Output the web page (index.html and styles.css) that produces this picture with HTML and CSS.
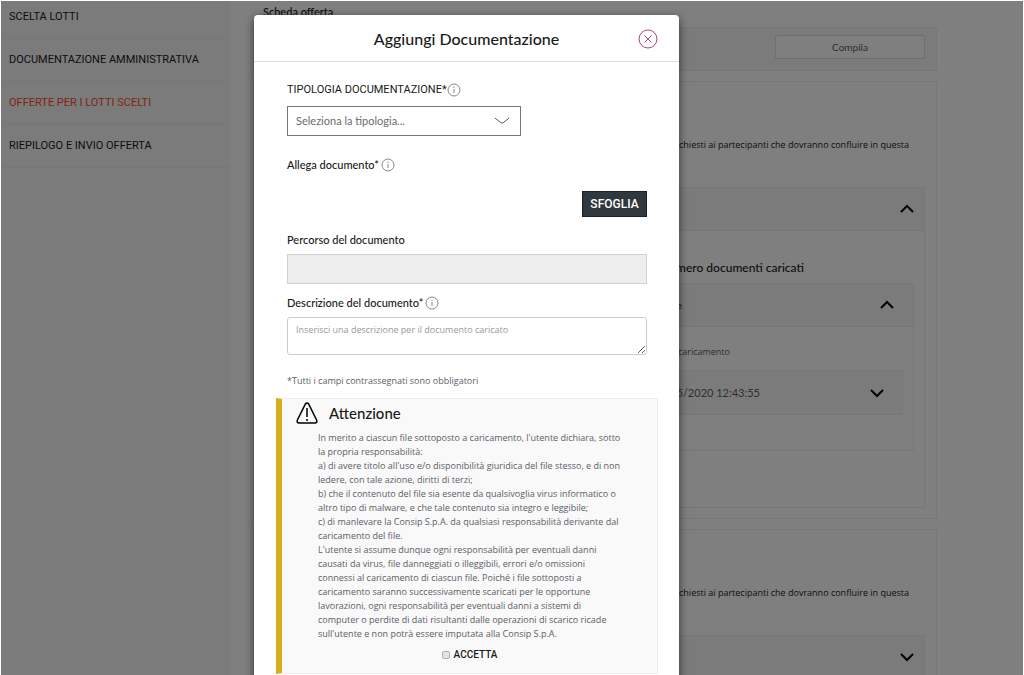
FILE: index.html
```html
<!DOCTYPE html>
<html lang="it">
<head>
    <meta charset="UTF-8">
    <meta name="viewport" content="width=device-width, initial-scale=1.0">
    <title>Aggiungi Documentazione</title>
    <link rel="stylesheet" href="styles.css">
</head>
<body>
    <div class="app">
        <nav class="sidebar">
            <a href="#">SCELTA LOTTI</a>
            <a href="#">DOCUMENTAZIONE AMMINISTRATIVA</a>
            <a href="#" class="active">OFFERTE PER I LOTTI SCELTI</a>
            <a href="#">RIEPILOGO E INVIO OFFERTA</a>
        </nav>

        <main class="content">
            <h2 class="content-title">Scheda offerta</h2>
            <div class="toolbar">
                <button type="button" class="compile-button">Compila</button>
            </div>

            <section class="card">
                <p class="card-text">richiesti ai partecipanti che dovranno confluire in questa</p>
                <div class="panel">
                    <div class="panel-header">
                        <svg class="arrow" viewBox="0 0 14 10"><path d="M1 8 L7 2 L13 8"/></svg>
                    </div>
                    <div class="panel-body">
                        <h3 class="panel-title">Numero documenti caricati</h3>
                        <div class="panel">
                            <div class="panel-header">
                                <span class="panel-name">Nome</span>
                                <svg class="arrow" viewBox="0 0 14 10"><path d="M1 8 L7 2 L13 8"/></svg>
                            </div>
                            <div class="file-list">
                                <p class="file-label">Data caricamento</p>
                                <div class="file-row">
                                    <span>05/2020 12:43:55</span>
                                    <svg class="arrow" viewBox="0 0 14 10"><path d="M1 2 L7 8 L13 2"/></svg>
                                </div>
                            </div>
                        </div>
                    </div>
                </div>
            </section>

            <section class="card">
                <p class="card-text">richiesti ai partecipanti che dovranno confluire in questa</p>
                <div class="panel">
                    <div class="panel-header">
                        <svg class="arrow" viewBox="0 0 14 10"><path d="M1 2 L7 8 L13 2"/></svg>
                    </div>
                </div>
            </section>
        </main>

        <div class="overlay">
            <div class="modal" role="dialog" aria-labelledby="modal-title">
                <header class="modal-header">
                    <h1 id="modal-title">Aggiungi Documentazione</h1>
                    <button type="button" class="close-button" aria-label="Chiudi">
                        <svg viewBox="0 0 20 20"><circle cx="10" cy="10" r="9"/><path d="M6.5 6.5 L13.5 13.5 M13.5 6.5 L6.5 13.5"/></svg>
                    </button>
                </header>

                <form class="modal-body">
                    <div class="field">
                        <div class="label-row label-caps">
                            <label for="tipologia">TIPOLOGIA DOCUMENTAZIONE*</label>
                            <svg class="info" viewBox="0 0 14 14"><circle cx="7" cy="7" r="6"/><path d="M7 6 V10 M7 3.6 V5"/></svg>
                        </div>
                        <div class="select-box">
                            <select id="tipologia">
                                <option>Seleziona la tipologia...</option>
                            </select>
                            <svg class="select-arrow" viewBox="0 0 16 8"><path d="M1 1 L6.5 5.5 Q8 6.8 9.5 5.5 L15 1"/></svg>
                        </div>
                    </div>

                    <div class="field upload">
                        <div class="label-row">
                            <label for="sfoglia">Allega documento*</label>
                            <svg class="info" viewBox="0 0 14 14"><circle cx="7" cy="7" r="6"/><path d="M7 6 V10 M7 3.6 V5"/></svg>
                        </div>
                        <button type="button" id="sfoglia" class="browse-button">SFOGLIA</button>
                    </div>

                    <div class="field">
                        <div class="label-row">
                            <label for="percorso">Percorso del documento</label>
                        </div>
                        <input type="text" id="percorso" class="path-input" disabled>
                    </div>

                    <div class="field">
                        <div class="label-row">
                            <label for="descrizione">Descrizione del documento*</label>
                            <svg class="info" viewBox="0 0 14 14"><circle cx="7" cy="7" r="6"/><path d="M7 6 V10 M7 3.6 V5"/></svg>
                        </div>
                        <textarea id="descrizione" placeholder="Inserisci una descrizione per il documento caricato"></textarea>
                    </div>

                    <p class="note">*Tutti i campi contrassegnati sono obbligatori</p>

                    <div class="alert">
                        <div class="alert-header">
                            <svg class="warning" viewBox="0 0 22 22"><path d="M9.4 2 Q11 -0.2 12.6 2 L20.6 18 Q21.6 21 18.8 21 H3.2 Q0.4 21 1.4 18 Z"/><path d="M11 6 V15 M11 17 V19"/></svg>
                            <h2>Attenzione</h2>
                        </div>
                        <p class="alert-text">
                            In merito a ciascun file sottoposto a caricamento, l'utente dichiara, sotto<br>
                            la propria responsabilità:<br>
                            a) di avere titolo all'uso e/o disponibilità giuridica del file stesso, e di non<br>
                            ledere, con tale azione, diritti di terzi;<br>
                            b) che il contenuto del file sia esente da qualsivoglia virus informatico o<br>
                            altro tipo di malware, e che tale contenuto sia integro e leggibile;<br>
                            c) di manlevare la Consip S.p.A. da qualsiasi responsabilità derivante dal<br>
                            caricamento del file.<br>
                            L'utente si assume dunque ogni responsabilità per eventuali danni<br>
                            causati da virus, file danneggiati o illeggibili, errori e/o omissioni<br>
                            connessi al caricamento di ciascun file. Poiché i file sottoposti a<br>
                            caricamento saranno successivamente scaricati per le opportune<br>
                            lavorazioni, ogni responsabilità per eventuali danni a sistemi di<br>
                            computer o perdite di dati risultanti dalle operazioni di scarico ricade<br>
                            sull'utente e non potrà essere imputata alla Consip S.p.A.
                        </p>
                        <div class="accept">
                            <input type="checkbox" id="accetta">
                            <label for="accetta">ACCETTA</label>
                        </div>
                    </div>
                </form>
            </div>
        </div>
    </div>
</body>
</html>
```
FILE: styles.css
```css
:root {
    --text: #1a1a1a;
    --text-light: #5a6065;
    --bg-grey: #f7f7f7;
    --line: #eeeeee;
    --accent: #ff4a1c;
    --warning: #d4b01f;
    --close: #a8427c;
    --font-small: "Open Sans", "Noto Sans", sans-serif;
}

* {
    margin: 0;
    padding: 0;
    box-sizing: border-box;
}

body {
    background-color: white;
    color: var(--text);
    font-family: Lato, "Liberation Sans", sans-serif;
    font-size: 10px;
    line-height: 14px;
    padding: 1px 1px 0;
    height: 100vh;
    overflow: hidden;
}

button, input, select, textarea {
    font: inherit;
}

svg {
    fill: none;
    flex-shrink: 0;
}

.app {
    position: relative;
    display: flex;
    height: 100%;
    overflow: hidden;
}

/* Menu */
.sidebar {
    width: 230px;
    flex-shrink: 0;
    background-color: var(--bg-grey);
}

.sidebar a {
    display: block;
    padding: 14px 8px;
    border-bottom: 1px solid var(--line);
    color: var(--text);
    font-family: Roboto, "Liberation Sans", sans-serif;
    font-size: 11px;
    text-decoration: none;
}

.sidebar a:first-child {
    padding-top: 9px;
}

.sidebar a.active {
    color: var(--accent);
}

/* Contenuto */
.content {
    flex: 1;
    padding: 4px 86px 0 22px;
}

.content-title {
    padding-left: 10px;
    font-size: 11px;
    font-weight: 500;
}

.toolbar {
    display: flex;
    justify-content: flex-end;
    margin-top: 8px;
    padding: 7px 11px 11px;
    background-color: var(--bg-grey);
    border: 1px solid var(--line);
}

.compile-button {
    width: 150px;
    height: 24px;
    background-color: white;
    border: 1px solid #dddddd;
    border-radius: 2px;
    color: var(--text-light);
}

.card {
    margin-top: 10px;
    padding: 56px 11px 10px;
    border: 1px solid var(--line);
}

.card-text {
    padding-right: 16px;
    margin-bottom: 35px;
    font-family: var(--font-small);
    font-size: 9px;
    font-weight: 500;
    text-align: right;
}

.panel {
    border: 1px solid var(--line);
}

.panel-header {
    display: flex;
    align-items: center;
    justify-content: flex-end;
    height: 43px;
    padding-right: 10px;
    background-color: var(--bg-grey);
    border-bottom: 1px solid var(--line);
}

.arrow {
    width: 14px;
    height: 10px;
    stroke: black;
    stroke-width: 2;
}

.panel-body {
    padding: 30px 10px 56px;
}

.panel-title {
    padding-right: 110px;
    margin-bottom: 8px;
    font-size: 12px;
    font-weight: 500;
    text-align: right;
}

.panel-body .panel-header {
    padding-right: 19px;
}

.panel-name {
    padding-right: 198px;
}

.file-list {
    padding: 18px 10px 35px;
}

.file-label {
    padding-right: 173px;
    margin-bottom: 11px;
    color: var(--text-light);
    font-family: var(--font-small);
    font-size: 9px;
    text-align: right;
}

.file-row {
    display: flex;
    align-items: center;
    justify-content: flex-end;
    gap: 110px;
    height: 45px;
    padding-right: 18px;
    background-color: var(--bg-grey);
    border: 1px solid var(--line);
    color: var(--text-light);
    font-size: 11px;
}

/* Finestra modale */
.overlay {
    position: absolute;
    inset: 0;
    padding: 14px 0 0 253px;
    background-color: rgba(0, 0, 0, 0.5);
}

.modal {
    max-width: 425px;
    background-color: white;
    border-radius: 4px;
    box-shadow: 0 3px 10px rgba(0, 0, 0, 0.6);
}

.modal-header {
    display: grid;
    grid-template-columns: 20px 1fr 20px;
    align-items: center;
    height: 47px;
    padding: 2px 21px 0;
    border-bottom: 1px solid #dddddd;
}

.modal-header h1 {
    grid-column: 2;
    font-size: 16px;
    font-weight: 500;
    text-align: center;
}

.close-button {
    height: 20px;
    background: none;
    border: none;
    cursor: pointer;
}

.close-button svg {
    display: block;
    width: 20px;
    height: 20px;
    stroke: var(--close);
}

.modal-body {
    padding: 21px 21px 16px 22px;
}

.field {
    padding: 0 11px;
    margin-bottom: 10px;
}

.label-row {
    display: flex;
    align-items: center;
    gap: 2px;
    height: 17px;
    margin-bottom: 6px;
    font-size: 11px;
    font-weight: 500;
}

.label-caps {
    align-items: flex-start;
    font-family: Roboto, "Liberation Sans", sans-serif;
    font-weight: 400;
    gap: 0;
}

.info {
    width: 14px;
    height: 14px;
    stroke: #888888;
}

.select-box {
    position: relative;
    width: 234px;
}

.select-box select {
    display: block;
    width: 100%;
    height: 30px;
    padding: 0 32px 0 8px;
    appearance: none;
    background-color: white;
    border: 1px solid #777777;
    color: #6c6c6c;
    font-size: 11px;
}

.select-arrow {
    position: absolute;
    top: 11px;
    right: 11px;
    width: 16px;
    height: 8px;
    stroke: #555555;
    pointer-events: none;
}

.upload {
    display: flex;
    flex-direction: column;
    margin-top: 20px;
    margin-bottom: 14px;
}

.browse-button {
    align-self: flex-end;
    width: 65px;
    height: 26px;
    margin-top: 12px;
    background-color: #30373d;
    border: 1px solid #1c2024;
    color: white;
    font-family: Roboto, "Liberation Sans", sans-serif;
    font-size: 12px;
    font-weight: 500;
}

.path-input {
    display: block;
    width: 100%;
    height: 30px;
    background-color: #eeeeee;
    border: 1px solid #d0d0d0;
}

textarea {
    display: block;
    width: 100%;
    height: 38px;
    padding: 5px 8px;
    border: 1px solid #cccccc;
    border-radius: 3px;
    font-family: var(--font-small);
    font-size: 9px;
    resize: vertical;
}

textarea::placeholder {
    color: #999999;
}

.note {
    padding: 9px 11px 0;
    color: var(--text-light);
    font-family: var(--font-small);
    font-size: 9px;
}

.alert {
    margin-top: 10px;
    padding: 2px 14px 11px;
    background-color: #f9f9f9;
    border: 1px solid var(--line);
    border-left: 6px solid var(--warning);
}

.alert-header {
    display: flex;
    align-items: center;
    gap: 11px;
    height: 24px;
}

.alert-header h2 {
    font-size: 15px;
    font-weight: 500;
}

.warning {
    width: 22px;
    height: 22px;
    stroke: black;
    stroke-width: 1.5;
}

.alert-text {
    margin: 6px 0 7px 22px;
    color: var(--text-light);
    font-family: var(--font-small);
    font-size: 9px;
    white-space: nowrap;
}

.accept {
    display: flex;
    align-items: center;
    justify-content: center;
    gap: 4px;
    font-family: Roboto, "Liberation Sans", sans-serif;
    font-weight: 500;
}

.accept input {
    width: 8px;
    height: 8px;
    appearance: none;
    background-color: #e4e4e4;
    border: 1px solid #b0b0b0;
    border-radius: 2px;
}

.accept input:checked {
    background-color: var(--text);
}
```
